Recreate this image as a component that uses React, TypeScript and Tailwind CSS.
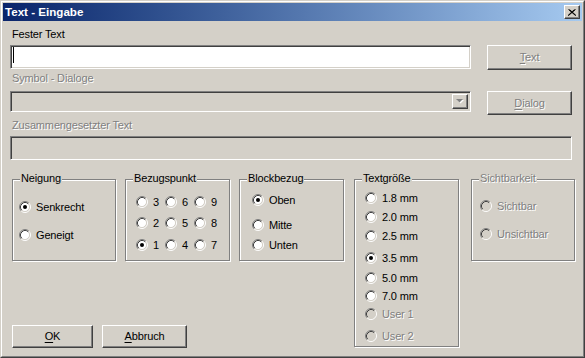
import React from "react";

const raised =
  "border border-t-white border-l-white border-r-[#404040] border-b-[#404040] shadow-[inset_-1px_-1px_0_#808080] bg-[#d4d0c8]";
const sunken =
  "border border-t-[#808080] border-l-[#808080] border-r-white border-b-white shadow-[inset_1px_1px_0_#404040,inset_-1px_-1px_0_#d4d0c8]";
const disabledText = "text-[#808080] [text-shadow:1px_1px_0_#ffffff]";

function Radio({ checked = false, disabled = false }: { checked?: boolean; disabled?: boolean }) {
  return (
    <svg width="12" height="12" viewBox="0 0 12 12" className="shrink-0">
      <circle cx="6" cy="6" r="4.5" fill={disabled ? "#d4d0c8" : "#ffffff"} />
      <path d="M2.11 9.89 A5.5 5.5 0 0 1 9.89 2.11" fill="none" stroke="#808080" strokeWidth="1" />
      <path d="M9.89 2.11 A5.5 5.5 0 0 1 2.11 9.89" fill="none" stroke="#ffffff" strokeWidth="1" />
      <path d="M2.82 9.18 A4.5 4.5 0 0 1 9.18 2.82" fill="none" stroke="#404040" strokeWidth="1" />
      <path d="M9.18 2.82 A4.5 4.5 0 0 1 2.82 9.18" fill="none" stroke="#d4d0c8" strokeWidth="1" />
      {checked && <circle cx="6" cy="6" r="2" fill="#000000" />}
    </svg>
  );
}

function RadioRow({
  label,
  checked,
  disabled,
  className = "",
}: {
  label: string;
  checked?: boolean;
  disabled?: boolean;
  className?: string;
}) {
  return (
    <div className={`flex items-center h-[14px] gap-[5px] ${className}`}>
      <Radio checked={checked} disabled={disabled} />
      <span className={`leading-[13px] whitespace-nowrap ${disabled ? disabledText : "text-black"}`}>{label}</span>
    </div>
  );
}

function GroupBox({
  title,
  disabled,
  className = "",
  children,
}: {
  title: string;
  disabled?: boolean;
  className?: string;
  children: React.ReactNode;
}) {
  return (
    <div
      className={`relative shrink-0 border border-[#808080] shadow-[inset_1px_1px_0_#ffffff,1px_1px_0_#ffffff] ${className}`}
    >
      <span
        className={`absolute left-[7px] top-[-8px] px-[1px] bg-[#d4d0c8] leading-[13px] whitespace-nowrap ${
          disabled ? disabledText : "text-black"
        }`}
      >
        {title}
      </span>
      {children}
    </div>
  );
}

function Button({
  children,
  disabled,
  className = "",
}: {
  children: React.ReactNode;
  disabled?: boolean;
  className?: string;
}) {
  return (
    <div className={`${raised} flex items-center justify-center shrink-0 ${className}`}>
      <span className={`leading-[13px] ${disabled ? disabledText : "text-black"}`}>{children}</span>
    </div>
  );
}

export default function App() {
  return (
    <div className="w-[585px] h-[358px] border border-t-[#d4d0c8] border-l-[#d4d0c8] border-r-[#404040] border-b-[#404040] bg-[#d4d0c8] font-['Liberation_Sans',Arial,sans-serif] text-[11px] tracking-[-0.15px] overflow-hidden">
      <div className="h-full border border-t-white border-l-white border-r-[#808080] border-b-[#808080] p-[1px] flex flex-col">
        {/* Title bar */}
        <div className="h-[18px] shrink-0 flex items-center justify-between pl-[2px] pr-[2px] bg-linear-to-r from-[#0a246a] to-[#a6caf0]">
          <span className="text-white font-bold text-[11.6px] tracking-normal leading-[14px]">Text - Eingabe</span>
          <div className={`${raised} w-[16px] h-[14px] flex items-center justify-center`}>
            <svg width="8" height="7" viewBox="0 0 8 7">
              <path d="M0.5 0.5 L7.5 6.5 M1.5 0.5 L8 6.5 M7.5 0.5 L0.5 6.5 M6.5 0.5 L0 6.5" stroke="#000" strokeWidth="1" />
            </svg>
          </div>
        </div>

        {/* Content */}
        <div className="flex flex-col pl-[7px]">
          <div className="mt-[7px] ml-[2px] h-[13px] leading-[13px] text-black">Fester Text</div>
          <div className="mt-[4px] flex items-start">
            <div className={`${sunken} bg-white w-[461px] h-[24px] shrink-0`}>
              <div className="ml-[2px] mt-[1px] w-[1px] h-[16px] bg-black" />
            </div>
            <Button disabled className="ml-[16px] w-[85px] h-[25px]">
              <span className="underline underline-offset-[2px]">T</span>ext
            </Button>
          </div>

          <div className={`mt-[2px] ml-[2px] h-[13px] leading-[13px] ${disabledText}`}>Symbol - Dialoge</div>
          <div className="mt-[6px] flex items-start">
            <div className={`${sunken} bg-[#d4d0c8] w-[461px] h-[21px] shrink-0 flex justify-end p-[2px]`}>
              <div className={`${raised} w-[16px] h-full flex items-center justify-center`}>
                <svg width="8" height="5" viewBox="0 0 8 5">
                  <path d="M1 1 H8 L4.5 4.5 Z" fill="#ffffff" />
                  <path d="M0 0 H7 L3.5 3.5 Z" fill="#808080" />
                </svg>
              </div>
            </div>
            <Button disabled className="ml-[16px] w-[85px] h-[24px]">
              <span className="underline underline-offset-[2px]">D</span>ialog
            </Button>
          </div>

          <div className={`mt-[4px] ml-[2px] h-[13px] leading-[13px] ${disabledText}`}>Zusammengesetzter Text</div>
          <div className={`${sunken} mt-[4px] bg-[#d4d0c8] w-[562px] h-[24px]`} />

          {/* Group area */}
          <div className="mt-[19px] ml-[2px] flex items-start">
            <div className="flex flex-col">
              <div className="flex items-start">
                <GroupBox title="Neigung" className="w-[104px] h-[82px] pl-[6px] pt-[20px]">
                  <RadioRow label="Senkrecht" checked />
                  <RadioRow label="Geneigt" className="mt-[14px]" />
                </GroupBox>
                <GroupBox title="Bezugspunkt" className="ml-[9px] w-[105px] h-[82px] pl-[10px] pt-[15px]">
                  <div className="grid grid-cols-[29px_29px_29px] gap-y-0">
                    <RadioRow label="3" />
                    <RadioRow label="6" />
                    <RadioRow label="9" />
                    <RadioRow label="2" className="mt-[7px]" />
                    <RadioRow label="5" className="mt-[7px]" />
                    <RadioRow label="8" className="mt-[7px]" />
                    <RadioRow label="1" checked className="mt-[8px]" />
                    <RadioRow label="4" className="mt-[8px]" />
                    <RadioRow label="7" className="mt-[8px]" />
                  </div>
                </GroupBox>
                <GroupBox title="Blockbezug" className="ml-[9px] w-[105px] h-[82px] pl-[12px] pt-[13px]">
                  <RadioRow label="Oben" checked />
                  <RadioRow label="Mitte" className="mt-[11px]" />
                  <RadioRow label="Unten" className="mt-[6px]" />
                </GroupBox>
              </div>
              <div className="mt-[64px] flex items-start">
                <Button className="w-[81px] h-[23px]">
                  <span className="underline underline-offset-[2px]">O</span>K
                </Button>
                <Button className="ml-[9px] w-[85px] h-[23px]">
                  <span className="underline underline-offset-[2px]">A</span>bbruch
                </Button>
              </div>
            </div>
            <GroupBox title="Textgröße" className="ml-[10px] w-[105px] h-[168px] pl-[10px] pt-[11px]">
              <RadioRow label="1.8 mm" />
              <RadioRow label="2.0 mm" className="mt-[5px]" />
              <RadioRow label="2.5 mm" className="mt-[5px]" />
              <RadioRow label="3.5 mm" checked className="mt-[8px]" />
              <RadioRow label="5.0 mm" className="mt-[6px]" />
              <RadioRow label="7.0 mm" className="mt-[4px]" />
              <RadioRow label="User 1" disabled className="mt-[4px]" />
              <RadioRow label="User 2" disabled className="mt-[8px]" />
            </GroupBox>
            <GroupBox title="Sichtbarkeit" disabled className="ml-[12px] w-[104px] h-[82px] pl-[8px] pt-[19px]">
              <RadioRow label="Sichtbar" disabled />
              <RadioRow label="Unsichtbar" disabled className="mt-[14px]" />
            </GroupBox>
          </div>
        </div>
      </div>
    </div>
  );
}
